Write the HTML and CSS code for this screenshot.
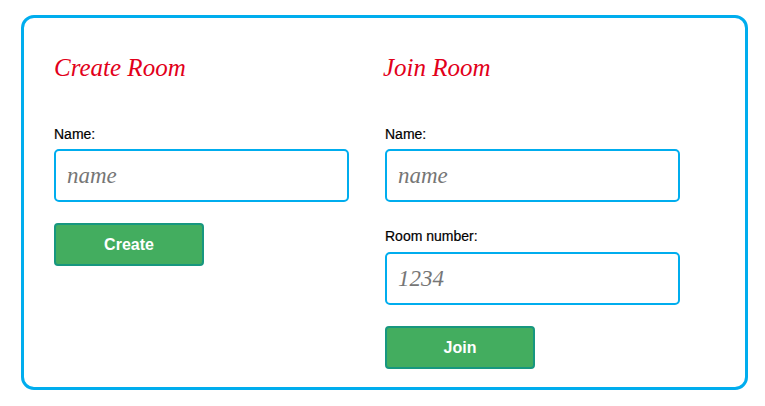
FILE: index.html
```html
<!DOCTYPE html>
<html>
<head>
<meta charset="utf-8">
<link rel="stylesheet" href="styles.css">
</head>
<body>
<div class="page">
  <div class="box">
    <section class="col">
      <h2 class="title">Create Room</h2>
      <label class="label">Name:</label>
      <input class="field" type="text" placeholder="name">
      <button class="btn">Create</button>
    </section>
    <section class="col">
      <h2 class="title">Join Room</h2>
      <label class="label">Name:</label>
      <input class="field" type="text" placeholder="name">
      <label class="label label-gap">Room number:</label>
      <input class="field" type="text" placeholder="1234">
      <button class="btn">Join</button>
    </section>
  </div>
</div>
</body>
</html>
```

FILE: styles.css
```css
* { box-sizing: border-box; }
html, body { margin: 0; padding: 0; background: #fff; }
.page {
  padding: 15px 17px 16px 21px;
}
.box {
  width: 727px;
  height: 375px;
  border: 3px solid #00adee;
  border-radius: 13px;
  padding: 36px 0 0 30px;
  display: grid;
  grid-template-columns: 295px 295px;
  column-gap: 36px;
  align-items: start;
}
.col {
  display: flex;
  flex-direction: column;
  align-items: flex-start;
}
.title {
  margin: 0 0 44px 0;
  font-family: "Liberation Serif", serif;
  font-style: italic;
  font-weight: normal;
  font-size: 25px;
  line-height: 28px;
  color: #e2001a;
}
.col:nth-child(2) .title { margin-left: -2px; }
.label {
  display: block;
  font-family: "Liberation Sans", sans-serif;
  font-size: 14px;
  line-height: 16px;
  color: #000;
  margin-bottom: 7px;
  -webkit-text-stroke: 0.2px #000;
}
.label-gap { margin-top: 26px; margin-bottom: 8px; }
.field {
  width: 295px;
  height: 53px;
  border: 2px solid #00adee;
  border-radius: 5px;
  padding: 0 11px;
  font-family: "Liberation Serif", serif;
  font-style: italic;
  font-size: 23px;
  color: #333;
  outline: none;
  background: #fff;
}
.field::placeholder { color: #767676; }
.btn {
  margin-top: 21px;
  width: 150px;
  height: 43px;
  background: #43ad5f;
  border: 2px solid #17977f;
  border-radius: 4px;
  color: #fff;
  font-family: "Liberation Sans", sans-serif;
  font-weight: bold;
  font-size: 16px;
  padding: 0;
}
```
